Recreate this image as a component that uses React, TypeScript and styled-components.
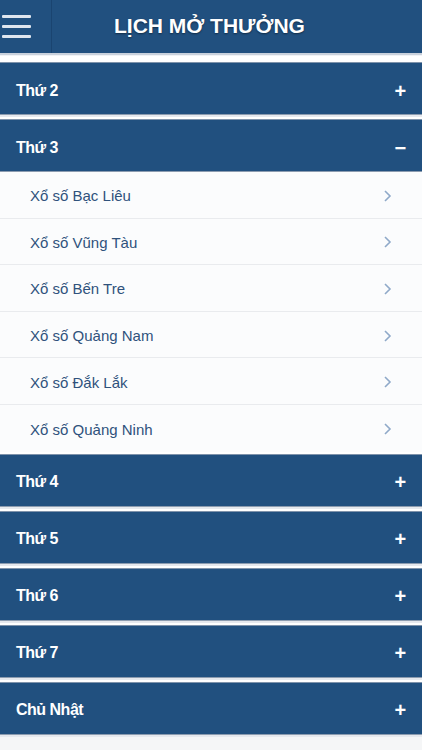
import React, { useState } from "react";
import styled, { createGlobalStyle } from "styled-components";

const GlobalStyle = createGlobalStyle`
  html, body {
    margin: 0;
    padding: 0;
    background: #f5f6f7;
    font-family: "Liberation Sans", Arial, sans-serif;
  }
  * { box-sizing: border-box; }
`;

const days = [
  { label: "Thứ 2", items: [] as string[] },
  {
    label: "Thứ 3",
    items: [
      "Xổ số Bạc Liêu",
      "Xổ số Vũng Tàu",
      "Xổ số Bến Tre",
      "Xổ số Quảng Nam",
      "Xổ số Đắk Lắk",
      "Xổ số Quảng Ninh",
    ],
  },
  { label: "Thứ 4", items: [] as string[] },
  { label: "Thứ 5", items: [] as string[] },
  { label: "Thứ 6", items: [] as string[] },
  { label: "Thứ 7", items: [] as string[] },
  { label: "Chủ Nhật", items: [] as string[] },
];

function App() {
  const [open, setOpen] = useState(1);
  return (
    <Page>
      <GlobalStyle />
      <Header>
        <MenuButton aria-label="menu">
          <span />
          <span />
          <span />
        </MenuButton>
        <Title>LỊCH MỞ THƯỞNG</Title>
      </Header>
      <List>
        {days.map((day, i) => (
          <Section key={day.label}>
            <DayBar onClick={() => setOpen(open === i ? -1 : i)}>
              <span>{day.label}</span>
              <Sign>{open === i ? "−" : "+"}</Sign>
            </DayBar>
            {open === i && (
              <Rows>
                {day.items.map((name) => (
                  <Row key={name}>
                    <span>{name}</span>
                    <svg width="9" height="14" viewBox="0 0 9 14">
                      <path
                        d="M2 2 L7 7 L2 12"
                        fill="none"
                        stroke="#8fa9c9"
                        strokeWidth="1.6"
                      />
                    </svg>
                  </Row>
                ))}
              </Rows>
            )}
          </Section>
        ))}
      </List>
    </Page>
  );
}

export default App;

const Page = styled.div`
  width: 422px;
  min-height: 750px;
  background: #f5f6f7;
`;

const Header = styled.header`
  height: 55px;
  background: #21507f;
  display: flex;
  align-items: center;
  border-bottom: 2px solid #c9d1dc;
`;

const MenuButton = styled.div`
  width: 52px;
  height: 100%;
  border-right: 1px solid #1a4470;
  display: flex;
  flex-direction: column;
  justify-content: center;
  gap: 7px;
  padding-left: 2px;

  span {
    display: block;
    width: 29px;
    height: 3px;
    background: #dfe6ef;
    border-radius: 1px;
  }
`;

const Title = styled.h1`
  flex: 1;
  margin: 0 0 0 -52px;
  text-align: center;
  color: #fff;
  font-size: 21px;
  font-weight: bold;
  letter-spacing: 0;
  text-shadow: 0 1px 2px rgba(0, 0, 0, 0.45);
  padding: 0 3px 2px 0;
`;

const List = styled.div`
  padding-top: 6px;
  background: #fff;
  border-top: 1px solid #f0f2f5;
`;

const Section = styled.div`
  background: #fff;
`;

const DayBar = styled.div`
  height: 53px;
  background: #21507f;
  border-top: 1px solid #7f93ab;
  border-bottom: 1px solid #8c9cb0;
  box-shadow: 0 2px 0 #e6e9ee;
  margin-bottom: 4px;
  display: flex;
  align-items: center;
  justify-content: space-between;
  padding: 4px 16px 0;
  color: #fff;
  font-size: 16px;
  font-weight: bold;
  letter-spacing: -0.5px;
  cursor: pointer;
`;

const Sign = styled.span`
  font-size: 20px;
  font-weight: bold;
  line-height: 1;
  width: 12px;
  text-align: center;
`;

const Rows = styled.div`
  background: #fbfcfd;
  margin: -4px 0 2px;
`;

const Row = styled.div`
  height: 46.6px;
  display: flex;
  align-items: center;
  justify-content: space-between;
  padding: 2px 30px 0 30px;
  border-bottom: 1px solid #e9ebee;
  color: #2f527c;
  font-size: 15px;

  &:last-child {
    border-bottom: none;
  }
`;
